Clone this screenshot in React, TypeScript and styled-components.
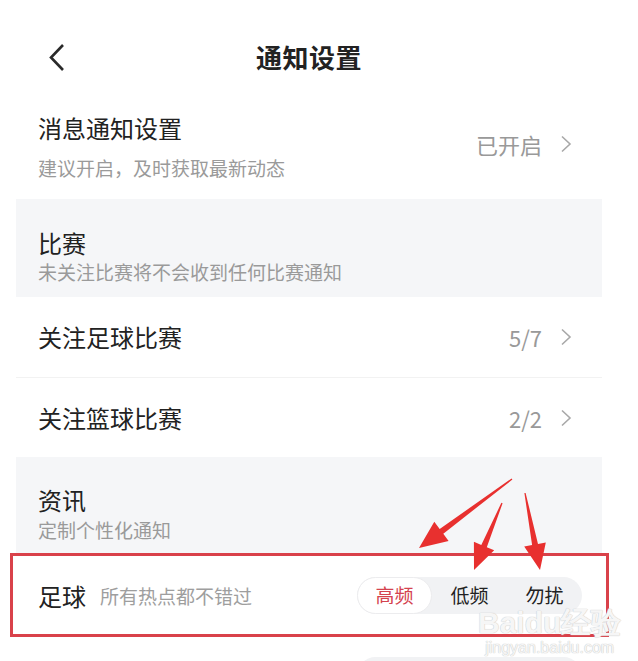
import React from 'react';
import styled, { createGlobalStyle } from 'styled-components';

const GlobalStyle = createGlobalStyle`
  html, body {
    margin: 0;
    padding: 0;
    background: #ffffff;
  }
  body {
    font-family: "Noto Sans CJK SC", "Noto Sans", sans-serif;
    color: #222;
  }
`;

const Page = styled.div`
  position: relative;
  width: 638px;
  height: 661px;
  overflow: hidden;
  background: #fff;
`;

const Header = styled.div`
  height: 96px;
  padding-top: 10px;
  padding-right: 20px;
  display: flex;
  align-items: center;
  justify-content: center;
  position: relative;
  .back {
    position: absolute;
    left: 48px;
    top: 44px;
  }
  .title {
    font-size: 26px;
    font-weight: 700;
    color: #222;
    letter-spacing: 0.5px;
    margin-top: -4px;
  }
`;

const List = styled.div`
  width: 586px;
  margin-left: 16px;
  display: flex;
  flex-direction: column;
`;

const Row = styled.div<{ $height: number; $divider?: boolean }>`
  height: ${(p) => p.$height}px;
  box-sizing: border-box;
  padding: 0 30px 0 22px;
  display: flex;
  align-items: center;
  justify-content: space-between;
  flex-shrink: 0;
  border-bottom: ${(p) => (p.$divider ? '1px solid #f2f2f2' : 'none')};
`;

const Section = styled.div<{ $height: number; $top: number }>`
  height: ${(p) => p.$height}px;
  box-sizing: border-box;
  padding: ${(p) => p.$top}px 22px 0;
  background: #f5f6f8;
  display: flex;
  flex-direction: column;
  flex-shrink: 0;
`;

const TextBlock = styled.div`
  display: flex;
  flex-direction: column;
`;

const Title = styled.div`
  font-size: 24px;
  line-height: 30px;
  color: #222;
`;

const Sub = styled.div<{ $gap: number }>`
  font-size: 19px;
  line-height: 24px;
  color: #9a9a9a;
  margin-top: ${(p) => p.$gap}px;
`;

const Value = styled.div<{ $lift?: number }>`
  display: flex;
  align-items: center;
  gap: 18px;
  font-size: 22px;
  color: #999;
  margin-top: ${(p) => -(p.$lift ?? 0)}px;
  .chev {
    display: block;
  }
`;

const InlineLabel = styled.div`
  display: flex;
  align-items: center;
  gap: 14px;
  .name {
    font-size: 24px;
    color: #222;
  }
  .desc {
    font-size: 19px;
    color: #9e9e9e;
  }
`;

const Segmented = styled.div`
  display: flex;
  width: 225px;
  height: 37px;
  border-radius: 19px;
  background: #f1f2f4;
  margin-right: -10px;
`;

const Segment = styled.div<{ $active?: boolean }>`
  width: 75px;
  height: 37px;
  box-sizing: border-box;
  border-radius: 19px;
  display: flex;
  align-items: center;
  justify-content: center;
  font-size: 19px;
  line-height: 22px;
  color: ${(p) => (p.$active ? '#d4434f' : '#222')};
  background: ${(p) => (p.$active ? '#ffffff' : 'transparent')};
  border: ${(p) => (p.$active ? '1px solid #ececee' : 'none')};
`;

const Highlight = styled.div`
  position: absolute;
  left: 10px;
  top: 553px;
  width: 599px;
  height: 84px;
  box-sizing: border-box;
  border: 3px solid #d9414a;
  pointer-events: none;
`;

const Arrows = styled.svg`
  position: absolute;
  left: 0;
  top: 0;
  pointer-events: none;
`;

const Watermark = styled.div`
  position: absolute;
  left: 478px;
  top: 609px;
  display: flex;
  flex-direction: column;
  align-items: center;
  pointer-events: none;
  color: rgba(255, 255, 255, 0.85);
  text-shadow: 0 0 1px #c8c8c8, 0 0 1px #c8c8c8;
  .logo {
    font-family: "Liberation Sans", sans-serif;
    font-size: 30px;
    font-weight: 700;
    line-height: 28px;
  }
  .url {
    font-family: "Liberation Sans", sans-serif;
    font-size: 16px;
    line-height: 18px;
    margin-top: 2px;
  }
`;

const ChevronRight = () => (
  <svg className="chev" width="12" height="18" viewBox="0 0 12 18">
    <path d="M2 1.5 L10 9 L2 16.5" fill="none" stroke="#a8a8a8" strokeWidth="1.6" />
  </svg>
);

const ChevronLeft = () => (
  <svg className="back" width="18" height="28" viewBox="0 0 18 28">
    <path d="M15 1 L3 13.5 L15 26" fill="none" stroke="#2a2a2a" strokeWidth="2.6" />
  </svg>
);

const FreqControl: React.FC<{ active: number; labels?: string[] }> = ({
  active,
  labels = ['高频', '低频', '勿扰'],
}) => (
  <Segmented>
    {labels.map((label, i) => (
      <Segment key={i} $active={i === active}>
        {label}
      </Segment>
    ))}
  </Segmented>
);

// filled annotation arrow: thin tail widening to a triangular head
const arrow = (x1: number, y1: number, x2: number, y2: number, head = 26, hw = 11) => {
  const dx = x2 - x1;
  const dy = y2 - y1;
  const len = Math.sqrt(dx * dx + dy * dy);
  const ux = dx / len;
  const uy = dy / len;
  const px = -uy;
  const py = ux;
  const bx = x2 - ux * head;
  const by = y2 - uy * head;
  const sw = 3;
  return [
    [x1 + px * 0.6, y1 + py * 0.6],
    [bx + px * sw, by + py * sw],
    [bx + px * hw, by + py * hw],
    [x2, y2],
    [bx - px * hw, by - py * hw],
    [bx - px * sw, by - py * sw],
    [x1 - px * 0.6, y1 - py * 0.6],
  ]
    .map((p) => `${p[0].toFixed(1)},${p[1].toFixed(1)}`)
    .join(' ');
};

const App: React.FC = () => {
  return (
    <Page>
      <GlobalStyle />
      <Header>
        <ChevronLeft />
        <div className="title">通知设置</div>
      </Header>
      <List>
        <Row $height={93} style={{ paddingTop: 7, paddingBottom: 19 }}>
          <TextBlock>
            <Title>消息通知设置</Title>
            <Sub $gap={13}>建议开启，及时获取最新动态</Sub>
          </TextBlock>
          <Value $lift={5}>
            已开启
            <ChevronRight />
          </Value>
        </Row>
        <Section $height={98} $top={29}>
          <Title>比赛</Title>
          <Sub $gap={2}>未关注比赛将不会收到任何比赛通知</Sub>
        </Section>
        <Row $height={81} $divider>
          <Title>关注足球比赛</Title>
          <Value>
            5/7
            <ChevronRight />
          </Value>
        </Row>
        <Row $height={79}>
          <Title>关注篮球比赛</Title>
          <Value>
            2/2
            <ChevronRight />
          </Value>
        </Row>
        <Section $height={96} $top={28}>
          <Title>资讯</Title>
          <Sub $gap={3}>定制个性化通知</Sub>
        </Section>
        <Row $height={84}>
          <InlineLabel>
            <span className="name">足球</span>
            <span className="desc">所有热点都不错过</span>
          </InlineLabel>
          <FreqControl active={0} />
        </Row>
        <Row $height={84} style={{ alignItems: 'flex-start', paddingTop: 20 }}>
          <InlineLabel />
          <FreqControl active={-1} labels={['', '', '']} />
        </Row>
      </List>

      <Highlight />
      <Watermark>
        <div className="logo">Baidu经验</div>
        <div className="url">jingyan.baidu.com</div>
      </Watermark>
      <Arrows width="638" height="661" viewBox="0 0 638 661">
        <polygon points={arrow(512, 479, 419, 548, 28, 12)} fill="#e8302f" />
        <polygon points={arrow(502, 503, 474, 570, 26, 11)} fill="#e8302f" />
        <polygon points={arrow(525, 493, 540, 570, 26, 11)} fill="#e8302f" />
      </Arrows>
    </Page>
  );
};

export default App;
